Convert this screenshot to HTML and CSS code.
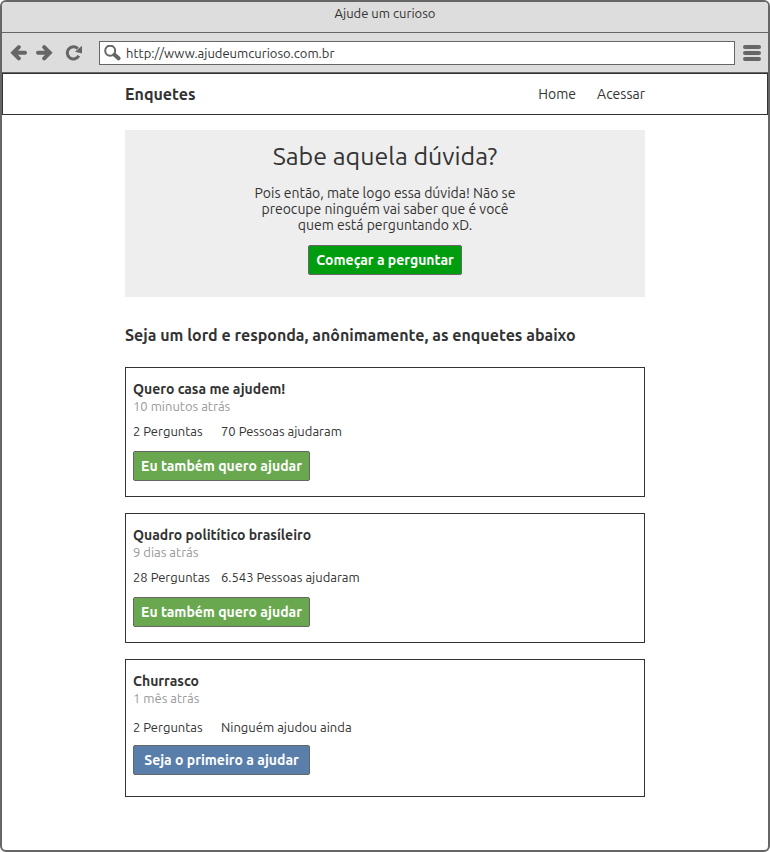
FILE: index.html
```html
<!DOCTYPE html>
<html lang="pt-BR">
<head>
<meta charset="utf-8">
<meta name="viewport" content="width=device-width, initial-scale=1">
<title>Ajude um curioso</title>
<link rel="stylesheet" href="styles.css">
</head>
<body>
<div class="window">
  <div class="titlebar">Ajude um curioso</div>
  <div class="toolbar">
    <button class="tool back" type="button" aria-label="Voltar">
      <svg width="18" height="16" viewBox="0 0 18 16"><path d="M8.800 2.200 3.200 7.800 8.800 13.400M4 7.800H15" /></svg>
    </button>
    <button class="tool forward" type="button" aria-label="Avançar">
      <svg width="18" height="16" viewBox="0 0 18 16"><path d="M9.200 2.200 14.800 7.800 9.200 13.400M14 7.800H3" /></svg>
    </button>
    <button class="tool reload" type="button" aria-label="Recarregar">
      <svg width="18" height="16" viewBox="0 0 18 16"><path class="arc" d="M12.800 3.600A6.100 6.100 0 1 0 13.800 10.700" /><path class="tip" d="M17 .8V8.500L10 6.800Z" /></svg>
    </button>
    <label class="address">
      <svg width="18" height="16" viewBox="0 0 18 16" aria-hidden="true"><circle cx="6.200" cy="5.700" r="5" /><path class="handle" d="M10.500 9.700 14.500 13.300" /></svg>
      <input type="text" aria-label="Endereço" value="http://www.ajudeumcurioso.com.br">
    </label>
    <button class="tool menu" type="button" aria-label="Menu">
      <svg width="18" height="16" viewBox="0 0 18 16"><path d="M2 2H16M2 8H16M2 14H16" /></svg>
    </button>
  </div>
  <header class="site-header">
    <div class="container header-row">
      <strong class="brand">Enquetes</strong>
      <nav class="nav">
        <a href="#home">Home</a>
        <a href="#acessar">Acessar</a>
      </nav>
    </div>
  </header>
  <main class="container">
    <section class="hero">
      <h1>Sabe aquela dúvida?</h1>
      <p>Pois então, mate logo essa dúvida! Não se<br>preocupe ninguém vai saber que é você<br>quem está perguntando xD.</p>
      <button class="btn btn-start" type="button">Começar a perguntar</button>
    </section>
    <h2>Seja um lord e responda, anônimamente, as enquetes abaixo</h2>
    <div class="polls">
      <article class="poll">
        <h3>Quero casa me ajudem!</h3>
        <time>10 minutos atrás</time>
        <p class="stats"><span>2 Perguntas</span><span>70 Pessoas ajudaram</span></p>
        <button class="btn btn-help" type="button">Eu também quero ajudar</button>
      </article>
      <article class="poll">
        <h3>Quadro politítico brasíleiro</h3>
        <time>9 dias atrás</time>
        <p class="stats"><span>28 Perguntas</span><span>6.543 Pessoas ajudaram</span></p>
        <button class="btn btn-help" type="button">Eu também quero ajudar</button>
      </article>
      <article class="poll poll-empty">
        <h3>Churrasco</h3>
        <time>1 mês atrás</time>
        <p class="stats"><span>2 Perguntas</span><span>Ninguém ajudou ainda</span></p>
        <button class="btn btn-first" type="button">Seja o primeiro a ajudar</button>
      </article>
    </div>
  </main>
</div>
</body>
</html>
```
FILE: styles.css
```css
* { box-sizing: border-box; }

body {
  margin: 0;
  font-family: Ubuntu, "Noto Sans", sans-serif;
  font-size: 13px;
  line-height: 16px;
  color: #333;
  background: #fff;
}

h1, h2, h3, p { margin: 0; }

button, input { font: inherit; color: inherit; }

.window {
  min-height: 100vh;
  border: 2px solid #666;
  border-radius: 6px;
  overflow: hidden;
}

.titlebar {
  height: 31px;
  padding-top: 3px;
  border-bottom: 1px solid #666;
  background: #ddd;
  text-align: center;
}

.toolbar {
  display: flex;
  align-items: center;
  height: 40px;
  padding: 0 7px 0 8px;
  border-bottom: 1px solid #666;
  background: #ddd;
}

.tool {
  display: flex;
  padding: 0;
  border: 0;
  background: none;
}

.forward { margin-left: 7px; }
.reload { margin-left: 12px; }
.menu { margin-left: 8px; }

.toolbar svg {
  flex: none;
  fill: none;
  stroke: #666;
  stroke-width: 4;
  stroke-linecap: round;
}

.reload svg .arc { stroke-width: 3; stroke-linecap: butt; }
.reload svg .tip { fill: #666; stroke: none; }
.address svg circle { stroke-width: 2; }

.address {
  display: flex;
  align-items: center;
  flex: 1;
  gap: 4px;
  height: 24px;
  margin-left: 16px;
  padding-left: 4px;
  border: 1px solid #666;
  background: #fff;
}

.address input {
  flex: 1;
  min-width: 0;
  padding: 0;
  border: 0;
  outline: 0;
  background: none;
}

.container {
  width: 100%;
  max-width: 520px;
  margin: 0 auto;
}

.site-header { border: 1px solid #333; }

.header-row {
  display: flex;
  align-items: center;
  justify-content: space-between;
  height: 40px;
}

.brand { font-size: 16px; }

.nav {
  display: flex;
  gap: 21px;
  font-size: 14px;
}

.nav a {
  color: inherit;
  text-decoration: none;
}

.hero {
  display: flex;
  flex-direction: column;
  align-items: center;
  gap: 12px;
  margin-top: 15px;
  padding: 11px 16px 22px;
  background: #eee;
  text-align: center;
}

h1 {
  margin-bottom: 2px;
  font-size: 25px;
  font-weight: 400;
  line-height: 30px;
}

.hero p { font-size: 14px; }

h2 {
  margin: 28px 0 22px;
  font-size: 16px;
  line-height: 20px;
}

.btn {
  height: 30px;
  padding: 0 7px;
  border: 1px solid #666;
  border-radius: 2px;
  color: #fff;
  font-size: 14px;
  font-weight: 700;
}

.btn-start { min-width: 154px; background: #009e0f; }
.btn-help { min-width: 177px; background: #6aa84f; }
.btn-first { min-width: 177px; background: #597eaa; }

.polls {
  display: grid;
  gap: 16px;
  padding-bottom: 16px;
}

.poll {
  padding: 12px 7px 15px;
  border: 1px solid #333;
}

h3 {
  font-size: 14px;
  line-height: 18px;
}

.poll time {
  display: block;
  color: #999;
}

.stats {
  display: grid;
  grid-template-columns: 80px 1fr;
  column-gap: 8px;
  margin: 8px 0 11px;
  line-height: 18px;
}

.poll-empty { padding-bottom: 21px; }
.poll-empty .stats { margin: 12px 0 9px; }
```
